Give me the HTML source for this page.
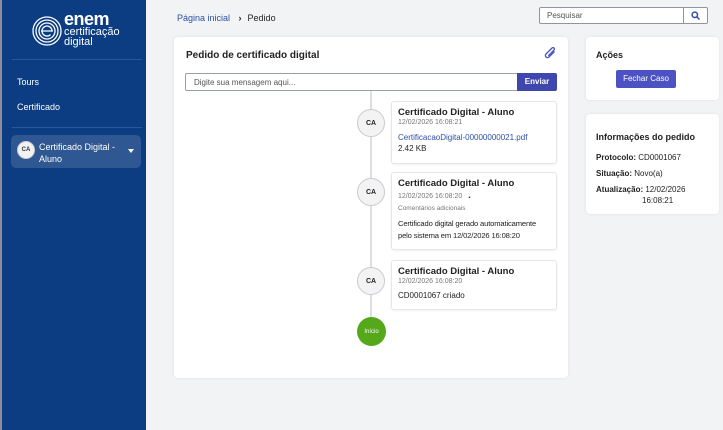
<!DOCTYPE html>
<html><head><meta charset="utf-8"><style>
*{box-sizing:border-box;margin:0;padding:0}
body{width:723px;height:430px;overflow:hidden;background:#f2f3f5;font-family:"Liberation Sans",sans-serif;color:#222;position:relative}
.side{position:absolute;left:0;top:0;width:146px;height:430px;background:#0c3d82;border-left:2px solid #8a8f99}
.hr{position:absolute;left:10px;width:130px;height:1px;background:#2d5696}
.nav{position:absolute;left:15px;color:#fff;font-size:9px}
.user{position:absolute;left:9px;top:135px;width:130px;height:33px;background:#2f5791;border-radius:5px;color:#fff;font-size:9px}
.av{position:absolute;width:22px;height:22px;border-radius:50%;background:#f2f2f2;border:1px solid #c9ccd2;font-size:6px;font-weight:bold;display:flex;align-items:center;justify-content:center;color:#333}
.card{position:absolute;background:#fff;border-radius:4px;box-shadow:0 0 3px rgba(0,0,0,.08)}
.ev{position:absolute;left:391px;width:166px;background:#fff;border:1px solid #e4e6ea;border-radius:3px;box-shadow:0 1px 2px rgba(0,0,0,.06);padding:5px 6px}
.ev b{font-size:9.5px;font-weight:bold;display:block;color:#222}
.ts{font-size:7px;color:#777;margin-top:1px}
.tl{position:absolute;width:28px;height:28px;border-radius:50%;background:#f3f3f3;border:1px solid #c7cad0;font-size:7px;font-weight:bold;display:flex;align-items:center;justify-content:center;left:357px}
</style></head><body>
<div class="side">
 <svg style="position:absolute;left:30px;top:16px" width="30" height="30" viewBox="0 0 30 30" fill="none" stroke="#fff" stroke-width="1.3"><circle cx="15" cy="15" r="14"/><circle cx="15" cy="15" r="11"/><circle cx="15" cy="15" r="8"/><path d="M9 15h12M20 15a5 5 0 1 0-1.5 3.6"/></svg>
 <div style="position:absolute;left:62px;top:12px;color:#fff;font-size:18px;font-weight:bold;line-height:15px;letter-spacing:-.5px">enem</div>
 <div style="position:absolute;left:62px;top:27px;color:#fff;font-size:11px;line-height:10px">certificação<br>digital</div>
 <div class="hr" style="top:59px"></div>
 <div class="nav" style="top:77px">Tours</div>
 <div class="nav" style="top:102px">Certificado</div>
 <div class="hr" style="top:127px"></div>
 <div class="user"><div class="av" style="left:6px;top:6px;width:18px;height:18px">CA</div>
  <div style="position:absolute;left:28px;top:6px;line-height:12px">Certificado Digital -<br>Aluno</div>
  <div style="position:absolute;right:7px;top:14px;border:3px solid transparent;border-top:4px solid #fff"></div></div>
</div>
<div style="position:absolute;left:177px;top:13px;font-size:9px;color:#2d4fa8">Página inicial <span style="color:#222;font-weight:bold;margin:0 6px">›</span><span style="color:#222">Pedido</span></div>
<div style="position:absolute;left:539px;top:7px;width:169px;height:17px;border:1px solid #8f95a0;border-radius:2px;background:#fff;font-size:8px;color:#555;padding:3px 7px">Pesquisar
 <div style="position:absolute;right:0;top:0;width:24px;height:15px;border-left:1px solid #8f95a0"><svg style="position:absolute;left:7px;top:3px" width="9" height="9" viewBox="0 0 9 9" fill="none" stroke="#2d4fa8" stroke-width="1.5"><circle cx="3.8" cy="3.8" r="2.7"/><path d="M6 6l2.5 2.5"/></svg></div></div>

<div class="card" style="left:174px;top:37px;width:394px;height:341px"></div>
<div style="position:absolute;left:186px;top:50px;font-size:10px;font-weight:bold">Pedido de certificado digital</div>
<svg style="position:absolute;left:543px;top:47px" width="14" height="14" viewBox="0 0 14 14" fill="none" stroke="#4a55c0" stroke-width="1.3"><path d="M11.5 4.5L6 10a2 2 0 0 1-3-3l6-6a1.3 1.3 0 0 1 2 2L5.3 8.8"/></svg>
<div style="position:absolute;left:185px;top:73px;width:333px;height:18px;border:1px solid #9aa0aa;border-radius:2px 0 0 2px;background:#fff;font-size:8px;color:#555;padding:4px 8px">Digite sua mensagem aqui...</div>
<div style="position:absolute;left:517px;top:73px;width:40px;height:18px;background:#3f46ad;color:#fff;font-size:8px;font-weight:bold;text-align:center;line-height:18px;border-radius:0 2px 2px 0">Enviar</div>
<div style="position:absolute;left:370px;top:91px;width:2px;height:240px;background:#dcdee2"></div>

<div class="tl" style="top:109px">CA</div>
<div class="ev" style="top:101px;height:63px"><b>Certificado Digital - Aluno</b><div class="ts">12/02/2026 16:08:21</div><div style="font-size:8px;color:#2d4fa8;margin-top:7px">CertificacaoDigital-00000000021.pdf</div><div style="font-size:8px;margin-top:2px">2.42 KB</div></div>
<div class="tl" style="top:178px">CA</div>
<div class="ev" style="top:172px;height:78px"><b>Certificado Digital - Aluno</b><div class="ts">12/02/2026 16:08:20 &nbsp; <b style="display:inline">.</b></div><div style="font-size:6.5px;color:#777;margin-top:4px">Comentários adicionais</div><div style="font-size:7.6px;margin-top:6px;line-height:12px;letter-spacing:-.15px;white-space:nowrap">Certificado digital gerado automaticamente<br>pelo sistema em 12/02/2026 16:08:20</div></div>
<div class="tl" style="top:267px">CA</div>
<div class="ev" style="top:260px;height:50px"><b>Certificado Digital - Aluno</b><div class="ts">12/02/2026 16:08:20</div><div style="font-size:8px;margin-top:6px">CD0001067 criado</div></div>
<div style="position:absolute;left:357px;top:317px;width:29px;height:29px;border-radius:50%;background:#54a81a;color:#fff;font-size:6px;display:flex;align-items:center;justify-content:center">Início</div>

<div class="card" style="left:586px;top:37px;width:133px;height:63px"></div>
<div style="position:absolute;left:596px;top:50px;font-size:9px;font-weight:bold">Ações</div>
<div style="position:absolute;left:616px;top:70px;width:60px;height:18px;background:#4d52c2;color:#fff;font-size:8px;text-align:center;line-height:18px;border-radius:2px">Fechar Caso</div>
<div class="card" style="left:586px;top:114px;width:133px;height:100px"></div>
<div style="position:absolute;left:596px;top:132px;font-size:9px;font-weight:bold">Informações do pedido</div>
<div style="position:absolute;left:596px;top:150px;font-size:8px;line-height:16px"><b>Protocolo:</b> CD0001067<br><b>Situação:</b> Novo(a)<br><b>Atualização:</b> 12/02/2026</div>
<div style="position:absolute;left:642px;top:196px;font-size:8px">16:08:21</div>
</body></html>
